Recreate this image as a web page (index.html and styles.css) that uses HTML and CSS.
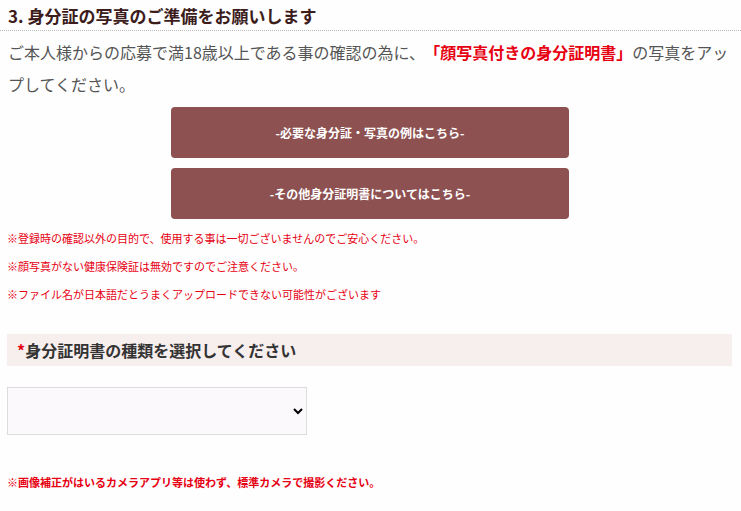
FILE: index.html
```html
<!DOCTYPE html>
<html lang="ja">
<head>
<meta charset="utf-8">
<link rel="stylesheet" href="styles.css">
</head>
<body>
<h2 class="sec-title">3. 身分証の写真のご準備をお願いします</h2>
<div class="content">
  <p class="lead">ご本人様からの応募で満18歳以上である事の確認の為に、<strong class="em">「顔写真付きの身分証明書」</strong>の写真をアップしてください。</p>
  <div class="buttons">
    <a class="btn">-必要な身分証・写真の例はこちら-</a>
    <a class="btn">-その他身分証明書についてはこちら-</a>
  </div>
  <p class="note">※登録時の確認以外の目的で、使用する事は一切ございませんのでご安心ください。</p>
  <p class="note">※顔写真がない健康保険証は無効ですのでご注意ください。</p>
  <p class="note">※ファイル名が日本語だとうまくアップロードできない可能性がございます</p>
  <div class="field-label"><span class="req">*</span>身分証明書の種類を選択してください</div>
  <select class="id-select"><option></option></select>
  <p class="note-bold">※画像補正がはいるカメラアプリ等は使わず、標準カメラで撮影ください。</p>
</div>
</body>
</html>
```
FILE: styles.css
```css
html, body {
  margin: 0;
  padding: 0;
  background: #fefefe;
  font-family: "Noto Sans CJK JP", "Noto Sans", sans-serif;
}
.sec-title {
  margin: 0;
  padding: 4px 8px 3px;
  font-size: 17px;
  line-height: 23px;
  font-weight: 700;
  color: #3d1c1c;
  border-bottom: 1px dotted #bdbdbd;
}
.content {
  padding: 0 9px 0 7px;
}
.lead {
  margin: 5px 0 0 1px;
  font-size: 16px;
  line-height: 32px;
  color: #555;
}
.em {
  color: #e60012;
  font-weight: 700;
  margin-left: 7px;
}
.buttons {
  display: flex;
  flex-direction: column;
  align-items: center;
  gap: 10px;
  margin-top: 7px;
  padding-left: 1px;
}
.btn {
  display: flex;
  align-items: center;
  justify-content: center;
  width: 398px;
  height: 51px;
  background: #8e5151;
  border-radius: 4px;
  color: #fff;
  font-size: 12px;
  font-weight: 700;
}
.note {
  margin: 0;
  font-size: 11px;
  line-height: 28px;
  color: #e60012;
}
.buttons + .note {
  margin-top: 5px;
}
.field-label {
  margin-top: 26px;
  height: 32px;
  display: flex;
  align-items: center;
  padding-left: 10px;
  background: #f7eeee;
  font-size: 16px;
  font-weight: 700;
  color: #333;
}
.req {
  color: #e60012;
}
.id-select {
  display: block;
  margin-top: 21px;
  width: 300px;
  height: 48px;
  border: 1px solid #dcdcdc;
  border-radius: 0;
  background: #fbf9fb;
  font-size: 14px;
  padding: 0 8px;
}
.note-bold {
  margin: 40px 0 0;
  font-size: 11px;
  line-height: 14px;
  font-weight: 700;
  color: #e60012;
}
```
